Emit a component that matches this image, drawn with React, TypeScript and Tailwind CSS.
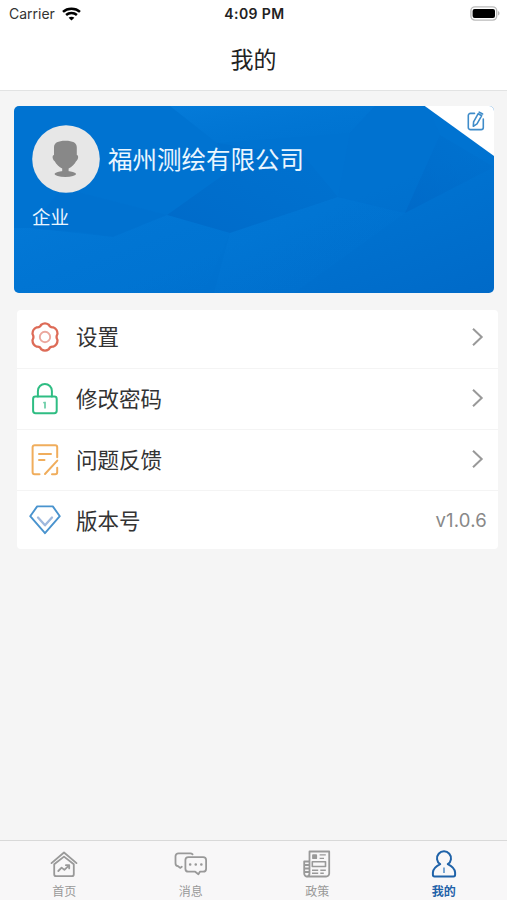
import type { ReactNode } from 'react';

interface MenuItem {
  label: string;
  icon: ReactNode;
  value?: string;
}

interface Tab {
  label: string;
  icon: ReactNode;
  active?: boolean;
}

const WifiIcon = () => (
  <svg width="19" height="14" viewBox="0 0 19 14" fill="none" stroke="#000" strokeWidth="2.5">
    <path d="M1 4.8C5.6.6 13.4.6 18 4.8" />
    <path d="M4.1 8c3-2.7 7.8-2.7 10.8 0" />
    <path d="M9.5 13.6 6.6 10.8c1.6-1.5 4.2-1.5 5.8 0z" fill="#000" stroke="none" />
  </svg>
);

const BatteryIcon = () => (
  <svg width="30" height="15" viewBox="0 0 30 15">
    <rect x=".9" y=".9" width="25.8" height="13.2" rx="4" fill="#fff" stroke="#bbb" strokeWidth="1.4" />
    <rect x="2.6" y="2.9" width="22.4" height="9.2" rx="2" fill="#000" />
    <path d="M28.2 5v4.6c1.7-.8 1.7-3.8 0-4.6z" fill="#aaa" />
  </svg>
);

const EditIcon = () => (
  <svg width="18" height="20" viewBox="0 0 18 20" fill="none" stroke="#3f8cc9" strokeWidth="1.6" strokeLinecap="round" strokeLinejoin="round">
    <path d="M7.5 2.4H3.5A2.2 2.2 0 0 0 1.3 4.6v11.8a2.2 2.2 0 0 0 2.2 2.2h10.6a2.2 2.2 0 0 0 2.2-2.2V8" />
    <path d="M11.2 2.7 6.6 10.9l-.3 4.4 3.7-2.4 4.7-8.2zM12.2 1.1l3.4 1.9" />
  </svg>
);

const GearIcon = () => (
  <svg className="mb-[2px]" width="30" height="30" viewBox="0 0 30 30" fill="none" stroke="#dd6b57" strokeWidth="2.3" strokeLinejoin="round">
    <path d="M11.2 2.7Q15 .1 18.8 2.7Q19.8 5.6 23.2 5.3Q27.6 7.1 27.5 12Q25.6 15 27.5 18Q27.6 22.9 23.2 24.7Q19.8 24.4 18.8 27.3Q15 29.9 11.2 27.3Q10.2 24.4 6.8 24.7Q2.4 22.9 2.5 18Q4.4 15 2.5 12Q2.4 7.1 6.8 5.3Q10.2 5.6 11.2 2.7Z" />
    <circle cx="15" cy="15" r="5.2" stroke="#eba79d" strokeWidth="1.9" />
  </svg>
);

const LockIcon = () => (
  <svg width="30" height="32" viewBox="0 0 30 32" fill="none" stroke="#2fbd83" strokeWidth="2" strokeLinecap="round">
    <rect x="3.1" y="13.6" width="23.6" height="16.6" rx="2.4" />
    <path d="M7.9 13.4V8a7 7 0 0 1 14 0v5.4" />
    <path d="M14 19.6h1v5.2" stroke="#6fcfaa" strokeWidth="1.8" />
  </svg>
);

const FeedbackIcon = () => (
  <svg width="30" height="32" viewBox="0 0 30 32" fill="none" stroke="#f0ad5c" strokeWidth="2" strokeLinecap="round" strokeLinejoin="round">
    <path d="M9.5 30.2H4.6a2 2 0 0 1-2-2V3.2a2 2 0 0 1 2-2h20.6a2 2 0 0 1 2 2v10" />
    <path d="M9 10h12M9 16h5.5M15 30 27.3 16.6M22 30.2h3.2a2 2 0 0 0 2-2v-4.5" />
  </svg>
);

const DiamondIcon = () => (
  <svg width="32" height="30" viewBox="0 0 32 30" fill="none" stroke="#4993ce" strokeWidth="1.9" strokeLinecap="round" strokeLinejoin="round">
    <path d="M8.2 1.4h15.6l7 9.8L16 28.2 1.2 11.2z" />
    <path d="m9 12.5 7 7.8 7-7.8" stroke="#9eb8dd" strokeWidth="2.3" />
  </svg>
);

const HomeIcon = () => (
  <svg width="28" height="27" viewBox="0 0 28 27" fill="none" stroke="currentColor" strokeWidth="1.8" strokeLinecap="round" strokeLinejoin="round">
    <path d="M1.5 12.1 14 1.5l12.5 10.6" />
    <path d="M4.2 13.3v9.9a2 2 0 0 0 2 2h15.6a2 2 0 0 0 2-2v-9.9L14 5.6z" />
    <path d="m8.3 20 3.3-3.4 2.8 2.3 4.6-4.5M15.9 14.2h3.3v3.2" />
  </svg>
);

const MessageIcon = () => (
  <svg width="34" height="24" viewBox="0 0 34 24" fill="none" stroke="currentColor" strokeWidth="1.8" strokeLinecap="round" strokeLinejoin="round">
    <path d="M18.6 2.4A3 3 0 0 0 16.3 1.3H4.5a3 3 0 0 0-3 3v6.9a3 3 0 0 0 2.6 3l2.1 1.7 1.6-1.1" />
    <path d="M14.4 5.1h14.7a3 3 0 0 1 3 3v8.6a3 3 0 0 1-3 3h-3.2l-1.5 2.5-3.2-2.5h-6.8a3 3 0 0 1-3-3V8.1a3 3 0 0 1 3-3z" />
    <path d="M16.1 12.5h.1M21.7 12.5h.1M27.3 12.5h.1" strokeWidth="2.5" />
  </svg>
);

const PolicyIcon = () => (
  <svg width="28" height="28" viewBox="0 0 28 28" fill="none" stroke="currentColor" strokeWidth="1.8" strokeLinejoin="round">
    <path d="M6.5 1.5h19.7v22a3 3 0 0 1-3 3H4.2a3.2 3.2 0 0 0 2.3-3.2z" />
    <path d="M6.3 11.5H1.2v11.8a3 3 0 0 0 3 3.2M1.5 15h4.5M1.5 18.5h4.5M1.5 22h4.5" />
    <path d="M10 5.2h3.2v3H10z" fill="currentColor" />
    <path d="M16.6 4.9h6.2M16.6 8.4h4.4M9 20.3h6.2M9 23.2h6.2M17.3 20.3h5.5M17.3 23.2h3.5" strokeWidth="1.4" />
    <path d="M9.3 11.8h13.2v4.7H9.3z" strokeWidth="1.6" />
  </svg>
);

const MineIcon = () => (
  <svg width="26" height="28" viewBox="0 0 26 28" fill="none" stroke="currentColor" strokeWidth="2" strokeLinejoin="round">
    <path d="M9.2 14.2A7 7 0 1 1 16.8 14.2C20.2 15.9 23.9 18.5 24.1 22.5V24.8Q24.1 26.4 22.5 26.4H3.5Q1.9 26.4 1.9 24.8V22.5C2.1 18.5 5.8 15.9 9.2 14.2Z" />
    <path d="M13 17.6v5.4" stroke="#6b9dce" strokeWidth="1.8" />
  </svg>
);

const Avatar = () => (
  <svg className="w-[68px] h-[68px] shrink-0" viewBox="0 0 68 68">
    <circle cx="34" cy="34" r="33.8" fill="#e7e7e7" />
    <ellipse cx="33.3" cy="49" rx="10.8" ry="2.9" fill="#888" />
    <path d="M22 30V22.5C22 17.8 26 15.8 33.4 15.8S44.8 17.8 44.8 22.5V30C46.8 30 46.6 34.5 44.1 36.2 42.6 39.6 39.5 42 36.6 43.6V48H30.2V43.6C27.3 42 24.2 39.6 22.7 36.2 20.2 34.5 20 30 22 30Z" fill="#888" />
  </svg>
);

// Low-poly backdrop of the profile card, with the folded corner at the top right
const CardBackdrop = () => (
  <svg className="absolute inset-0 w-full h-full" viewBox="0 0 480 187" preserveAspectRatio="none">
    <defs>
      <linearGradient id="base" x1="0" y1="0" x2="1" y2="1">
        <stop offset="0" stopColor="#0073d1" />
        <stop offset=".6" stopColor="#0073d1" />
        <stop offset="1" stopColor="#006ac8" />
      </linearGradient>
      <linearGradient id="dark" x1="1" y1="0" x2="0" y2="1">
        <stop offset="0" stopColor="#006bc8" stopOpacity=".1" />
        <stop offset="1" stopColor="#0067c6" stopOpacity=".7" />
      </linearGradient>
      <linearGradient id="light" x1="0" y1="0" x2="1" y2="1">
        <stop offset="0" stopColor="#067ddb" stopOpacity=".8" />
        <stop offset="1" stopColor="#0076d4" stopOpacity="0" />
      </linearGradient>
    </defs>
    <rect width="480" height="187" fill="url(#base)" />
    <path d="M156 0 203 37 336 27 361 0z" fill="url(#light)" />
    <path d="M203 37 219 62 153 109 216 127 324 91 290 50z" fill="url(#dark)" />
    <path d="M16 122 66 126 99 131 153 109 48 82z" fill="#006bcb" opacity=".15" />
    <path d="M0 122 16 122 99 131 153 109 216 127 190 187H0z" fill="url(#light)" opacity=".7" />
    <path d="M216 127 324 91 391 107 280 187H200z" fill="url(#light)" opacity=".5" />
    <path d="M336 27 361 0h52l13 29-35 78-67-16z" fill="#006dcc" opacity=".12" />
    <path d="M426 29 480 61 391 107z" fill="url(#dark)" />
    <path d="M408-2h74v53.5z" fill="#fff" />
  </svg>
);

const menuItems: MenuItem[] = [
  { label: '设置', icon: <GearIcon /> },
  { label: '修改密码', icon: <LockIcon /> },
  { label: '问题反馈', icon: <FeedbackIcon /> },
  { label: '版本号', icon: <DiamondIcon />, value: 'v1.0.6' },
];

const tabs: Tab[] = [
  { label: '首页', icon: <HomeIcon /> },
  { label: '消息', icon: <MessageIcon /> },
  { label: '政策', icon: <PolicyIcon /> },
  { label: '我的', icon: <MineIcon />, active: true },
];

const App = () => {
  return (
    <div className="flex flex-col w-full h-screen overflow-hidden bg-[#f5f5f5] font-['Inter','Noto_Sans_CJK_SC',sans-serif]">
      {/* Status bar + title */}
      <header className="h-[91px] shrink-0 bg-white border-b border-[#e2e3e3]">
        <div className="grid grid-cols-3 items-center h-[27px] pl-[9px] pr-[7px]">
          <div className="flex items-center gap-[7px] text-[14px] text-[#333]">
            <span>Carrier</span>
            <WifiIcon />
          </div>
          <span className="text-center text-[14px] tracking-[0.4px] font-semibold text-[#222] whitespace-nowrap">4:09 PM</span>
          <div className="flex justify-end">
            <BatteryIcon />
          </div>
        </div>
        <h1 className="text-center text-[23px] leading-[66px] text-[#222]">我的</h1>
      </header>

      <main className="flex-1 min-h-0">
        {/* Profile card */}
        <section className="relative h-[187px] mt-[15px] ml-[14px] mr-[13px] rounded-[5px] overflow-hidden">
          <CardBackdrop />
          <div className="relative pl-[18px] pt-[19px] text-[#eaf6ff]">
            <div className="flex items-center gap-[8px]">
              <Avatar />
              <span className="pt-[2px] text-[24.5px] leading-[36px]">福州测绘有限公司</span>
            </div>
            <p className="mt-[10px] text-[18.5px] leading-[28px]">企业</p>
          </div>
          <button className="absolute right-[9px] top-[5px]">
            <EditIcon />
          </button>
        </section>

        {/* Menu */}
        <ul className="mt-[17px] ml-[17px] mr-[9px] rounded-[4px] bg-white overflow-hidden">
          {menuItems.map((item) => (
            <li
              key={item.label}
              className="flex items-center h-[61px] first:h-[59px] first:pb-[3px] last:h-[58px] pr-[11px] pl-[12px] border-b border-[#f4f4f4] last:border-b-0"
            >
              <span className="flex justify-center w-[32px] shrink-0">{item.icon}</span>
              <span className={`ml-[15px] flex-1 text-[21.5px] text-[#333] ${item.value ? 'pt-[2px]' : ''}`}>{item.label}</span>
              {item.value ? (
                <span className="pt-[2px] text-[18.5px] tracking-[0.2px] text-[#888]">{item.value}</span>
              ) : (
                <svg className="mr-[3px] mb-[2px]" width="13" height="20" viewBox="0 0 13 20" fill="none" stroke="#999" strokeWidth="2">
                  <path d="m2 1.7 8.7 8.3L2 18.3" />
                </svg>
              )}
            </li>
          ))}
        </ul>
      </main>

      {/* Bottom tabs */}
      <nav className="grid grid-cols-4 h-[60px] pl-px shrink-0 bg-[#f8f7f8] border-t border-[#d9d9d9]">
        {tabs.map((tab) => (
          <div
            key={tab.label}
            className={`flex flex-col items-center pt-[8px] ${tab.active ? 'text-[#1f62a8] font-bold' : 'text-[#999]'}`}
          >
            <span className="flex items-center h-[30px]">{tab.icon}</span>
            <span className="mt-[4px] text-[12px] leading-[18px]">{tab.label}</span>
          </div>
        ))}
      </nav>
    </div>
  );
};

export default App;
